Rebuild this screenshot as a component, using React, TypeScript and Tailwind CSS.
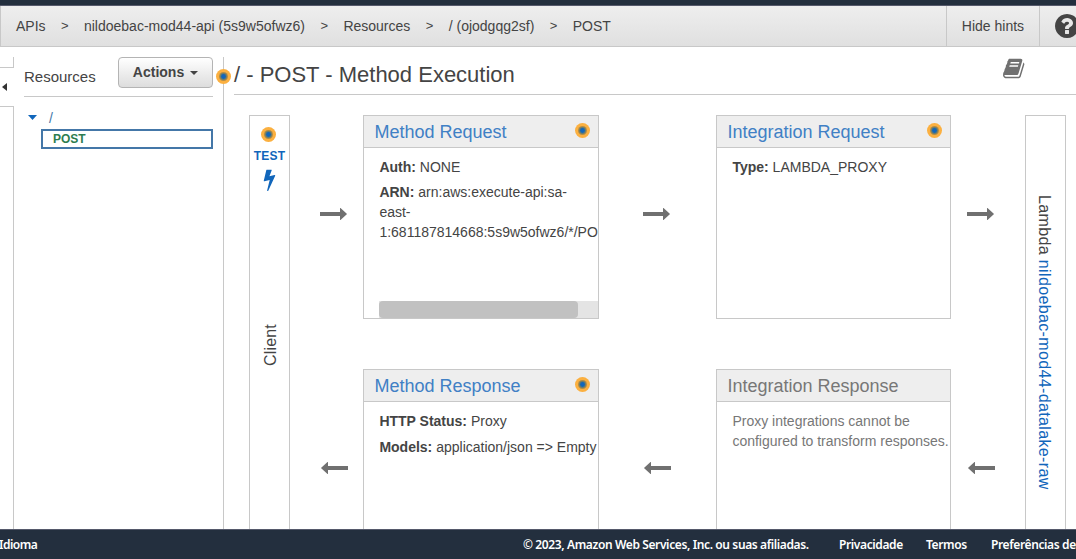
import type { ReactNode } from "react";

const BOOK =
  "M1639 478q40 57 18 129l-275 906q-19 64-76.5 107.5t-122.5 43.5h-923q-77 0-148.5-53.5t-99.5-131.5q-24-67-2-127 0-4 3-27t4-37q1-8-3-21.5t-3-19.5q2-11 8-21t16.5-23.5 16.5-23.5q23-38 45-91.5t30-91.5q3-10 .5-30t-.5-28q3-11 17-28t17-23q21-36 42-92t25-90q1-9-2.5-32t.5-28q4-13 22-30.5t22-22.5q19-26 42.5-84.5t27.5-96.5q1-8-3-25.5t-2-26.5q2-8 9-18t18-23 17-21q8-12 16.5-30.5t15-35 16-36 19.5-32 26.5-23.5 36-11.5 47.5 5.5l-1 3q38-9 51-9h761q74 0 114 56t18 130l-274 906q-36 119-71.5 153.5t-128.5 34.5h-869q-27 0-38 15-11 16-1 43 24 70 144 70h923q29 0 56-15.5t35-41.5l300-987q7-22 5-57 38 15 59 43zm-1064 2q-4 13 2 22.5t20 9.5h608q13 0 25.5-9.5t16.5-22.5l21-64q4-13-2-22.5t-20-9.5h-608q-13 0-25.5 9.5t-16.5 22.5zm-83 256q-4 13 2 22.5t20 9.5h608q13 0 25.5-9.5t16.5-22.5l21-64q4-13-2-22.5t-20-9.5h-608q-13 0-25.5 9.5t-16.5 22.5z";
const BOLT =
  "M1333 566q18 20 7 44l-540 1157q-13 25-42 25-4 0-14-2-17-5-25.5-19t-4.5-30l197-808-406 101q-4 1-12 1-18 0-31-11-18-15-13-39l201-825q4-14 16-23t28-9h328q19 0 32 12.5t13 29.5q0 8-5 18l-171 463 396-98q8-2 12-2 19 0 34 15z";
const HELP =
  "M1024 1376v-192q0-14-9-23t-23-9h-192q-14 0-23 9t-9 23v192q0 14 9 23t23 9h192q14 0 23-9t9-23zm256-672q0-88-55.5-163t-138.5-116-170-41q-243 0-371 213-15 24 8 42l132 100q7 6 19 6 16 0 25-12 53-68 86-92 34-24 86-24 48 0 85.5 26t37.5 59q0 38-20 61t-68 45q-63 28-115.5 86.5t-52.5 125.5v36q0 14 9 23t23 9h192q14 0 23-9t9-23q0-19 21.5-49.5t54.5-49.5q32-18 49-28.5t46-35 44.5-48 28-60.5 12.5-81zm384 192q0 209-103 385.5t-279.5 279.5-385.5 103-385.5-103-279.5-279.5-103-385.5 103-385.5 279.5-279.5 385.5-103 385.5 103 279.5 279.5 103 385.5z";

function Glyph({ d, className }: { d: string; className: string }) {
  return (
    <svg viewBox="0 0 1792 1792" className={className} fill="currentColor">
      <path d={d} />
    </svg>
  );
}

function Hint({ className = "" }: { className?: string }) {
  return (
    <svg viewBox="0 0 15 15" className={`size-[15px] shrink-0 ${className}`}>
      <circle cx="7.5" cy="7.5" r="7.5" fill="#fbb040" />
      <circle cx="7.5" cy="7.5" r="4.5" fill="#ae8c4a" />
      <circle cx="7.5" cy="7.5" r="3.4" fill="#6b7c6c" />
      <circle cx="7.5" cy="7.5" r="2.4" fill="#1166bb" />
    </svg>
  );
}

function Arrow({ left = false }: { left?: boolean }) {
  return (
    <svg viewBox="0 0 27 12" className={left ? "h-3 w-[27px] rotate-180" : "h-3 w-[27px]"} fill="#707070">
      <path d="M0 4h20V.3q0-.5.5-.2l6.300 5.600q.3.300 0 .6L20.500 11.900q-.5.300-.5-.2V8H0z" />
    </svg>
  );
}

function Arrows({ className }: { className: string }) {
  return (
    <div className={`flex shrink-0 flex-col pt-[93px] ${className}`}>
      <Arrow />
      <div className="h-[242px]" />
      <div className="pl-px">
        <Arrow left />
      </div>
    </div>
  );
}

function Card({
  title,
  hint = true,
  muted = false,
  children,
}: {
  title: string;
  hint?: boolean;
  muted?: boolean;
  children: ReactNode;
}) {
  return (
    <section className="flex h-[204px] shrink-0 flex-col overflow-hidden border border-[#c8c8c8]">
      <header className="flex h-8 shrink-0 items-center justify-between border-b border-[#c8c8c8] bg-[#eee] pr-2 pl-[10.4px]">
        <h2 className={muted ? "pt-px text-[18px] text-[#777]" : "pt-px text-[18px] text-[#4080c5]"}>{title}</h2>
        {hint && <Hint className="-mt-0.5" />}
      </header>
      <div
        className={
          muted
            ? "flex flex-1 flex-col pt-[9px] pl-[15.4px] text-[14px] leading-5 whitespace-nowrap text-[#777]"
            : "flex flex-1 flex-col pt-[9px] pl-[15.4px] text-[14px] leading-5 whitespace-nowrap"
        }
      >
        {children}
      </div>
    </section>
  );
}

function Separator() {
  return <span className="w-[23.4px] pl-[0.5px] text-[13px]">&gt;</span>;
}

export default function App() {
  return (
    <div className="flex h-[559px] w-[1076px] flex-col overflow-hidden bg-white font-['Liberation_Sans',Arial,sans-serif] text-[14px] text-[#444]">
      <div className="h-1.5 shrink-0 border-b border-[#55596b] bg-[#232f3e]" />
      <nav className="flex h-[41px] shrink-0 border-b border-l border-[#c8c8c8] bg-linear-to-b from-[#eee] to-[#e0e0e0]">
        <div className="flex w-[945px] shrink-0 items-center pl-[15px] whitespace-nowrap">
          <span className="pr-[15px]">APIs</span>
          <Separator />
          <span className="pr-[15px]">nildoebac-mod44-api (5s9w5ofwz6)</span>
          <Separator />
          <span className="pr-[15px]">Resources</span>
          <Separator />
          <span className="pr-[15px]">/ (ojodgqg2sf)</span>
          <Separator />
          <span>POST</span>
        </div>
        <div className="flex w-[93px] shrink-0 items-center justify-center border-l border-[#c8c8c8]">Hide hints</div>
        <div className="flex shrink-0 items-center border-l border-[#c8c8c8] pl-[13px]">
          <Glyph d={HELP} className="size-7 shrink-0" />
        </div>
      </nav>

      <main className="flex h-[482px] shrink-0 overflow-hidden">
        <aside className="flex w-[14px] shrink-0 flex-col pt-2.5">
          <div className="h-[11px] shrink-0 border-r border-b border-[#c8c8c8]" />
          <div className="flex h-[38px] shrink-0 items-center pl-0.5">
            <svg viewBox="0 0 5 8" className="h-2 w-[5px]" fill="#333">
              <path d="M5 0v8L0 4z" />
            </svg>
          </div>
          <div className="flex-1 border-t border-r border-[#c8c8c8]" />
        </aside>

        <section className="w-[209px] shrink-0 pt-2.5 pr-2.5 pl-2.5">
          <div className="flex h-10 items-start justify-between border-b border-[#c8c8c8]">
            <h2 className="pt-[9px] text-[15px] leading-[22px]">Resources</h2>
            <button className="flex h-[31px] w-[95px] items-center justify-center gap-[6px] rounded-[4px] border border-[#b4b4b4] bg-linear-to-b from-white to-[#ddd] text-[14px] font-bold">
              Actions
              <svg viewBox="0 0 8 4" className="mt-px h-1 w-2" fill="#444">
                <path d="M0 0h8L4 4z" />
              </svg>
            </button>
          </div>
          <div className="flex h-8 items-end gap-3 pb-[1px] pl-1">
            <svg viewBox="0 0 9 5" className="mb-[8px] h-[5px] w-[9px]" fill="#1166bb">
              <path d="M0 0h9L4.500 5z" />
            </svg>
            <span className="leading-[20px] text-[#4477a8]">/</span>
          </div>
          <div className="ml-[17px] flex h-5 w-[172px] items-center border-2 border-[#4477a8] pl-[10px] text-[12px] font-bold text-[#2e7d4f]">
            POST
          </div>
        </section>

        <section className="flex shrink-0 pt-2.5">
          <div className="relative w-px shrink-0 bg-[#c8c8c8]">
            <Hint className="absolute top-3 -left-[7px]" />
          </div>
          <div className="ml-2.5 flex w-[842px] shrink-0 flex-col">
            <header className="flex h-[38px] shrink-0 justify-between border-b border-[#c8c8c8] pr-[50px]">
              <h1 className="pt-1 text-[22px] leading-[27px] whitespace-nowrap">/ - POST - Method Execution</h1>
              <Glyph d={BOOK} className="size-[23px] text-[#707070]" />
            </header>

            <div className="flex pt-5 pl-[15px]">
              <div className="flex h-[500px] w-[41px] shrink-0 flex-col items-center border border-[#c8c8c8] pt-[11px]">
                <Hint className="-ml-0.5" />
                <span className="pt-[6px] text-[12px] leading-[16px] font-bold tracking-[0.2px] text-[#1166bb]">TEST</span>
                <Glyph d={BOLT} className="mt-1 mr-px size-[23px] text-[#1166bb]" />
                <span className="mt-[133px] ml-0.5 rotate-180 text-[16px] leading-[20px] tracking-[0.2px] [writing-mode:vertical-rl]">
                  Client
                </span>
              </div>
              <Arrows className="w-[73px] pl-[30px]" />

              <div className="flex w-[236px] shrink-0 flex-col gap-[50px]">
                <Card title="Method Request">
                  <p>
                    <b>Auth:</b> NONE
                  </p>
                  <p className="pt-[5px]">
                    <b>ARN:</b> arn:aws:execute-api:sa-
                    <br />
                    east-
                    <br />
                    1:681187814668:5s9w5ofwz6/*/PO
                  </p>
                  <div className="mt-auto h-[17px] bg-[#e4e4e4]">
                    <div className="h-full w-[199px] rounded-[4px] bg-[#c1c1c1]" />
                  </div>
                </Card>
                <Card title="Method Response">
                  <p>
                    <b>HTTP Status:</b> Proxy
                  </p>
                  <p className="pt-1.5">
                    <b>Models:</b> application/json =&gt; Empty
                  </p>
                </Card>
              </div>
              <Arrows className="w-[117px] pl-[44.4px]" />

              <div className="flex w-[235px] shrink-0 flex-col gap-[50px]">
                <Card title="Integration Request">
                  <p>
                    <b>Type:</b> LAMBDA_PROXY
                  </p>
                </Card>
                <Card title="Integration Response" hint={false} muted>
                  <p>
                    Proxy integrations cannot be
                    <br />
                    configured to transform responses.
                  </p>
                </Card>
              </div>
              <Arrows className="w-[74px] pl-4" />

              <div className="flex h-[500px] w-[41px] shrink-0 justify-center border border-[#c8c8c8] pt-[79px] pr-1">
                <span className="text-[16px] leading-[20px] tracking-[0.36px] whitespace-nowrap [writing-mode:vertical-rl]">
                  Lambda <span className="text-[#1166bb]">nildoebac-mod44-datalake-raw</span>
                </span>
              </div>
            </div>
          </div>
        </section>
      </main>

      <footer className="flex h-[30px] shrink-0 items-center border-t border-[#55596b] bg-[#232f3e] pt-px font-['Noto_Sans','Open_Sans',sans-serif] text-[12px] font-semibold tracking-[-0.38px] whitespace-nowrap text-white">
        <span className="-ml-px w-[524px] shrink-0 tracking-[-0.5px]">Idioma</span>
        <span className="w-[316px] shrink-0">© 2023, Amazon Web Services, Inc. ou suas afiliadas.</span>
        <span className="w-[87px] shrink-0">Privacidade</span>
        <span className="w-[65px] shrink-0">Termos</span>
        <span className="shrink-0">Preferências de</span>
      </footer>
    </div>
  );
}
